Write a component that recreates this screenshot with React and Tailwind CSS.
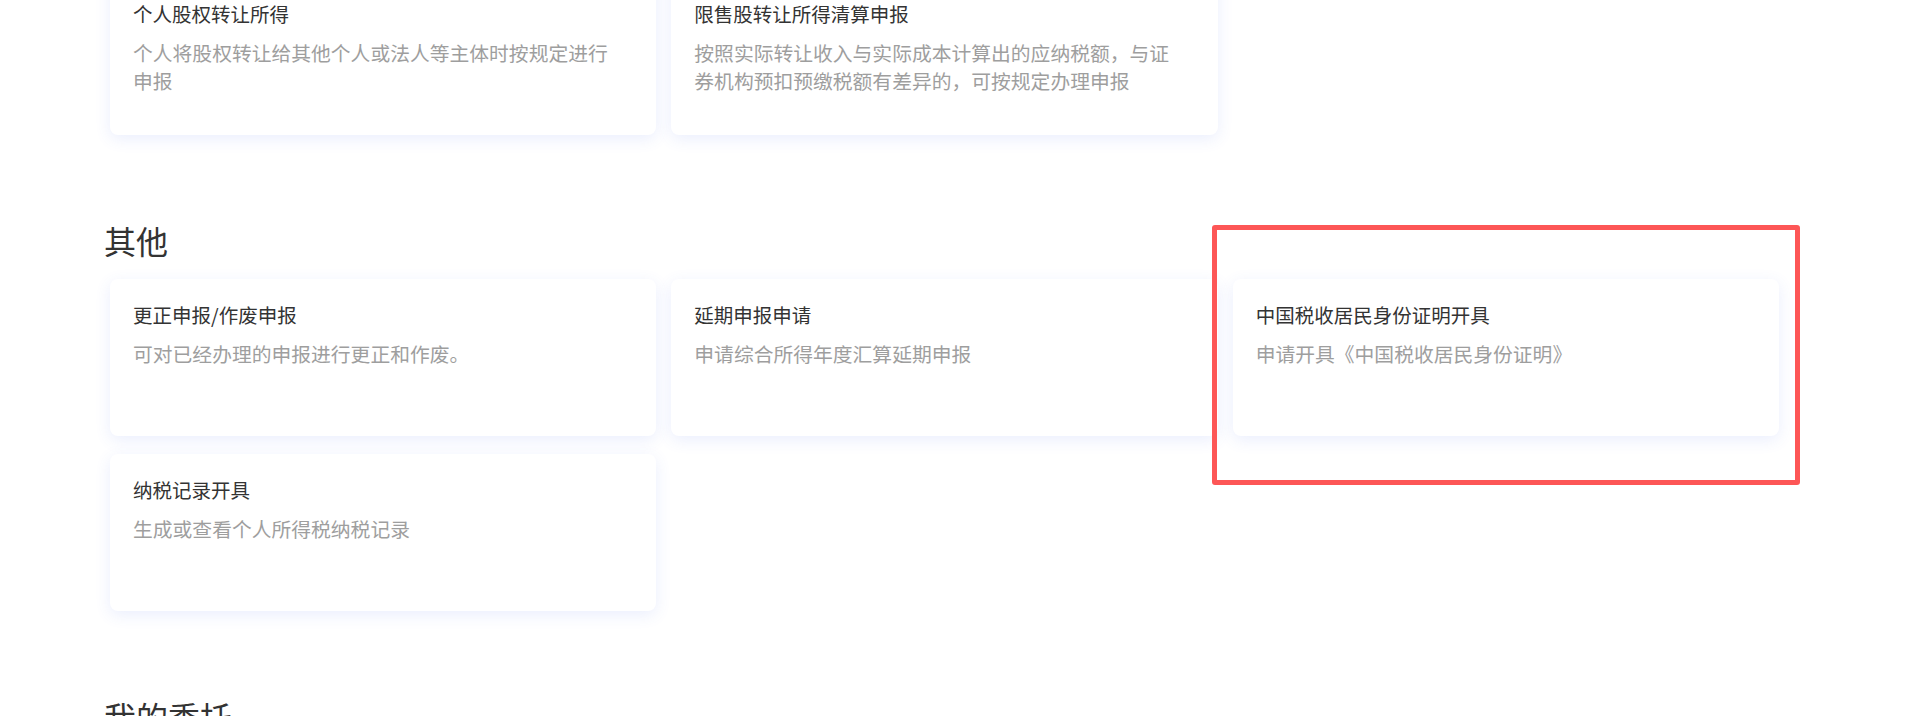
import React from 'react'

const topCards = [
  { title: '个人股权转让所得', desc: '个人将股权转让给其他个人或法人等主体时按规定进行申报' },
  { title: '限售股转让所得清算申报', desc: '按照实际转让收入与实际成本计算出的应纳税额，与证券机构预扣预缴税额有差异的，可按规定办理申报' },
]

const otherCards = [
  { title: '更正申报/作废申报', desc: '可对已经办理的申报进行更正和作废。' },
  { title: '延期申报申请', desc: '申请综合所得年度汇算延期申报' },
  { title: '中国税收居民身份证明开具', desc: '申请开具《中国税收居民身份证明》' },
  { title: '纳税记录开具', desc: '生成或查看个人所得税纳税记录' },
]

const font = { fontFamily: '"Noto Sans CJK SC", "Noto Sans", sans-serif' }

const Card = ({ title, desc }) => (
  <div className='h-[157px] rounded-[8px] bg-white px-[23px] pt-[22px] shadow-[0_4px_16px_rgba(60,100,235,0.11)] cursor-pointer'>
    <h3 className='text-[19.5px] leading-[28px] text-[#333]'>{title}</h3>
    <p className='mt-[11px] max-w-[486px] text-[19.8px] leading-[28px] text-[#9e9e9e]'>{desc}</p>
  </div>
)

const Section = ({ title, cards }) => (
  <section className='mt-[83px]'>
    <h2 className='pl-[104px] text-[32px] leading-[44px] text-[#333]'>{title}</h2>
    <div className='mt-[17px] ml-[110px] w-[1669px] grid grid-cols-3 gap-x-[15px] gap-y-[18px]'>
      {cards.map(c => (
        <Card key={c.title} title={c.title} desc={c.desc} />
      ))}
    </div>
  </section>
)

const App = () => {
  return (
    <div className='relative w-full h-[716px] overflow-hidden bg-white' style={font}>
      {/* previous section, scrolled partly out of view */}
      <div className='mt-[-22px] ml-[110px] w-[1669px] grid grid-cols-3 gap-x-[15px]'>
        {topCards.map(c => (
          <Card key={c.title} title={c.title} desc={c.desc} />
        ))}
      </div>

      <Section title='其他' cards={otherCards} />
      <Section title='我的委托' cards={[]} />

      {/* highlight annotation */}
      <div className='absolute left-[1212px] top-[225px] w-[588px] h-[260px] border-[5px] border-[#fd5656] rounded-[3px] pointer-events-none' />
    </div>
  )
}

export default App
